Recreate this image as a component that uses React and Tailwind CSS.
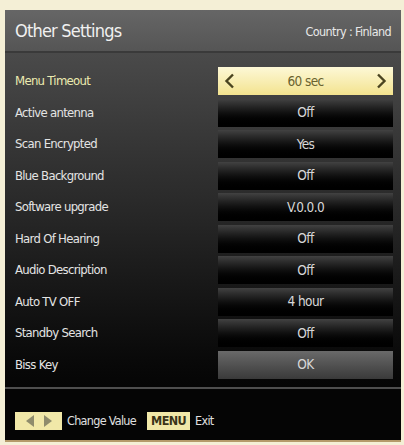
import React from "react";

const rows = [
  ["Menu Timeout", "60 sec"],
  ["Active antenna", "Off"],
  ["Scan Encrypted", "Yes"],
  ["Blue Background", "Off"],
  ["Software upgrade", "V.0.0.0"],
  ["Hard Of Hearing", "Off"],
  ["Audio Description", "Off"],
  ["Auto TV OFF", "4 hour"],
  ["Standby Search", "Off"],
  ["Biss Key", "OK"],
];

const font = { fontFamily: '"DejaVu Sans Condensed", "DejaVu Sans", sans-serif', fontStretch: "condensed" };

export default function App() {
  return (
    <div className="w-[404px] h-[445px] bg-[#f4efd6] pt-[10px] pl-[5px] pr-[3px] overflow-hidden" style={font}>
      <div className="w-[396px] h-[432px] flex flex-col bg-[#050505] border-b-[2px] border-[#b49a6a]">
        <div className="h-[43px] flex items-center justify-between px-[10px] bg-gradient-to-b from-[#666666] to-[#555555] border-b-[2px] border-[#3a3a3a]">
          <span className="text-[18px] text-[#f0f0f0] tracking-[-0.8px]">Other Settings</span>
          <span className="text-[12.5px] text-[#e8e8e8] tracking-[-0.6px] pt-[3px]">Country : Finland</span>
        </div>
        <div className="flex flex-col gap-[3.5px] pt-[14px] pb-[8px] pr-[8px] bg-gradient-to-b from-[#4a4a4a] via-[#262626] to-[#050505]">
          {rows.map(([label, value], i) => {
            const sel = i === 0;
            const ok = i === 9;
            return (
              <div key={label} className="flex items-center h-[28px]">
                <span className={`pl-[10px] w-[213px] text-[13px] tracking-[-0.7px] ${sel ? "text-[#ecebb0]" : "text-[#e4e4e4]"}`}>{label}</span>
                {sel ? (
                  <div className="flex-1 h-full flex items-center justify-between px-[6px] bg-gradient-to-b from-[#fdf8d6] to-[#f3e38e]">
                    <svg width="11" height="16" viewBox="0 0 11 16"><path d="M9 1.5 L2.5 8 L9 14.5" fill="none" stroke="#4a4420" strokeWidth="2.4" /></svg>
                    <span className="text-[13.5px] text-[#6a6330] tracking-[-0.6px]">{value}</span>
                    <svg width="11" height="16" viewBox="0 0 11 16"><path d="M2 1.5 L8.5 8 L2 14.5" fill="none" stroke="#4a4420" strokeWidth="2.4" /></svg>
                  </div>
                ) : (
                  <div className={`flex-1 h-full flex items-center justify-center bg-gradient-to-b ${ok ? "from-[#6a6a6a] to-[#3a3a3a]" : "from-[#424242] via-[#101010] to-[#000000]"}`}>
                    <span className="text-[13.5px] text-[#d8d8d8] tracking-[-0.6px]">{value}</span>
                  </div>
                )}
              </div>
            );
          })}
        </div>
        <div className="h-[2px] bg-[#4e4e4e]" />
        <div className="flex-1 flex items-center gap-[5px] pl-[10px] pt-[14px]">
          <div className="w-[47px] h-[18px] bg-[#f1e8a8] flex items-center justify-center gap-[8px]">
            <svg width="10" height="12" viewBox="0 0 10 12"><path d="M9 0 L1 6 L9 12 Z" fill="#8f8c6c" /></svg>
            <svg width="10" height="12" viewBox="0 0 10 12"><path d="M1 0 L9 6 L1 12 Z" fill="#8f8c6c" /></svg>
          </div>
          <span className="text-[12.5px] text-[#e0e0e0] tracking-[-0.7px] mr-[6px]">Change Value</span>
          <div className="h-[18px] px-[4px] bg-[#f1e8a8] flex items-center">
            <span className="text-[12.5px] text-[#3a3418] font-bold tracking-[-0.6px]">MENU</span>
          </div>
          <span className="text-[12.5px] text-[#e0e0e0] tracking-[-0.7px]">Exit</span>
        </div>
      </div>
    </div>
  );
}
